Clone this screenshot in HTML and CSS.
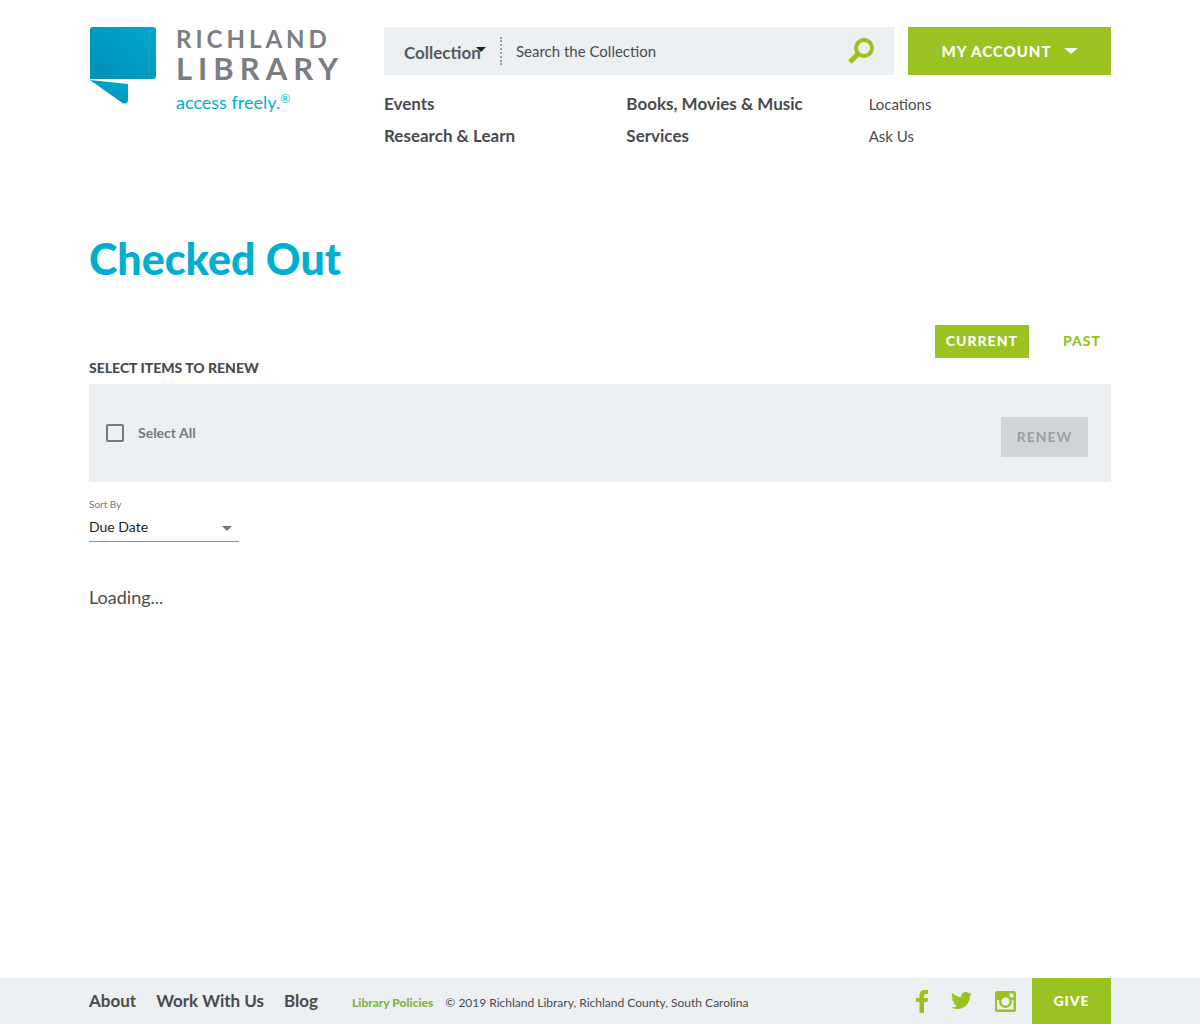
FILE: index.html
```html
<!DOCTYPE html>
<html lang="en">
<head>
<meta charset="utf-8">
<meta name="viewport" content="width=device-width, initial-scale=1">
<title>Checked Out | Richland Library</title>
<link rel="stylesheet" href="styles.css">
</head>
<body>
<header class="wrap header">
  <a class="logo" href="#" aria-label="Richland Library home">
    <svg class="logo-mark" width="68" height="78" viewBox="0 0 68 78" aria-hidden="true">
      <defs>
        <linearGradient id="fill" x1="0" y1="1" x2="1" y2="0">
          <stop offset="0" stop-color="#008fb5"/>
          <stop offset="1" stop-color="#00a9ce"/>
        </linearGradient>
      </defs>
      <path fill="url(#fill)" d="M4 0H64Q67 0 67 3V49Q67 52 64 52H1V3Q1 0 4 0Z"/>
      <path fill="url(#fill)" d="M1 53L39 57V73Q39 77 35 76.500Q34 76.500 32 75Z"/>
    </svg>
    <span class="logo-text">
      <span class="logo-top">RICHLAND</span>
      <span class="logo-main">LIBRARY</span>
      <span class="logo-tag">access freely.<span class="logo-reg">®</span></span>
    </span>
  </a>
  <div class="header-main">
    <div class="tools">
      <form class="search">
        <span class="scope">
          <select class="scope-select" aria-label="Search in"><option>Collection</option><option>Website</option></select>
          <svg class="scope-caret" width="10" height="5" viewBox="0 0 10 5" aria-hidden="true"><path fill="#222" d="M0 0H10L5 5Z"/></svg>
        </span>
        <input class="search-input" type="text" placeholder="Search the Collection" aria-label="Search the Collection">
        <button class="search-button" type="submit" aria-label="Search">
          <svg width="28" height="28" viewBox="0 0 28 28" aria-hidden="true" fill="none" stroke="#9ac221"><circle cx="17" cy="11" r="8" stroke-width="4"/><path stroke-width="5" d="M11 17L3 25"/></svg>
        </button>
      </form>
      <button class="account" type="button">MY ACCOUNT
        <svg width="14" height="6" viewBox="0 0 14 6" aria-hidden="true"><path fill="#fff" d="M0 0H14L7 6Z"/></svg>
      </button>
    </div>
    <nav class="nav" aria-label="Main">
      <a href="#">Events</a>
      <a href="#">Books, Movies &amp; Music</a>
      <a class="minor" href="#">Locations</a>
      <a href="#">Research &amp; Learn</a>
      <a href="#">Services</a>
      <a class="minor" href="#">Ask Us</a>
    </nav>
  </div>
</header>

<main class="wrap main">
  <h1 class="title">Checked Out</h1>
  <nav class="tabs" aria-label="Checkouts">
    <a class="tab tab-active" href="#" aria-current="page">CURRENT</a>
    <a class="tab" href="#">PAST</a>
  </nav>
  <h2 class="subtitle">SELECT ITEMS TO RENEW</h2>
  <div class="panel">
    <label class="select-all"><input class="checkbox" type="checkbox">Select All</label>
    <button class="renew" type="button" disabled>RENEW</button>
  </div>
  <div class="sort">
    <label class="sort-label" for="sort">Sort By</label>
    <select class="sort-select" id="sort"><option>Due Date</option><option>Title</option><option>Author</option></select>
    <svg class="sort-caret" width="10" height="5" viewBox="0 0 10 5" aria-hidden="true"><path fill="#757575" d="M0 0H10L5 5Z"/></svg>
  </div>
  <p class="loading">Loading...</p>
</main>

<footer class="footer">
  <div class="wrap footer-row">
    <nav class="footer-nav" aria-label="Footer">
      <a href="#">About</a>
      <a href="#">Work With Us</a>
      <a href="#">Blog</a>
    </nav>
    <p class="legal"><a href="#">Library Policies</a><span>© 2019 Richland Library, Richland County, South Carolina</span></p>
    <div class="social">
      <a href="#" aria-label="Facebook"><svg width="12" height="23" viewBox="0 0 12 23" aria-hidden="true"><path fill="#9ac221" d="M12 0V4H10Q8 4 8 6V8H12L11.600 12H8V23H3.500V12H0V8H3.500V5.500Q3.500 0 9 0Z"/></svg></a>
      <a href="#" aria-label="Twitter"><svg width="21" height="20" viewBox="0 2 24 21" aria-hidden="true"><path fill="#9ac221" d="M23.950 4.570a10 10 0 0 1-2.820.770 4.960 4.960 0 0 0 2.160-2.720c-.950.550-2 .960-3.130 1.180a4.920 4.920 0 0 0-8.380 4.480C7.690 8.090 4.070 6.130 1.640 3.160a4.920 4.920 0 0 0 1.520 6.570 4.900 4.900 0 0 1-2.230-.610v.060a4.920 4.920 0 0 0 3.950 4.830 5 5 0 0 1-2.210.080 4.940 4.940 0 0 0 4.600 3.420A9.870 9.870 0 0 1 0 19.540a14 14 0 0 0 7.550 2.210c9.050 0 14-7.500 14-13.980 0-.210 0-.420-.020-.630a9.940 9.940 0 0 0 2.420-2.570Z"/></svg></a>
      <a href="#" aria-label="Instagram"><svg width="21" height="21" viewBox="0 0 21 21" aria-hidden="true"><rect width="21" height="21" rx="2.500" fill="#9ac221"/><path fill="#ecf0f3" d="M2 9H18.500V18.500H2ZM14.500 2.500H18.500V6.500H14.500Z"/><circle cx="10.500" cy="10.500" r="6.500" fill="#9ac221"/><circle cx="10.500" cy="10.500" r="4" fill="#ecf0f3"/></svg></a>
    </div>
    <a class="give" href="#">GIVE</a>
  </div>
</footer>
</body>
</html>
```

FILE: styles.css
```css
* { box-sizing: border-box; }

body {
  margin: 0;
  min-height: 100vh;
  display: flex;
  flex-direction: column;
  background: #fff;
  color: #4a4b4d;
  font-family: Lato, "Open Sans", sans-serif;
  font-size: 16px;
  line-height: 24px;
}

a { color: inherit; text-decoration: none; }
h1, h2, p { margin: 0; }
svg { display: block; }
button, select, input { margin: 0; font: inherit; color: inherit; border: 0; border-radius: 0; }

.wrap { width: 100%; max-width: 1022px; margin: 0 auto; }

/* Header */
.header { display: flex; padding-top: 27px; }
.logo { flex: 0 0 295px; display: flex; gap: 19px; }
.logo-text { display: flex; flex-direction: column; color: #7b7d82; font-weight: 700; white-space: nowrap; }
.logo-top { font-size: 24px; line-height: 24px; letter-spacing: 4px; }
.logo-main { font-size: 31px; line-height: 34px; letter-spacing: 6px; }
.logo-tag { display: flex; color: #00aed0; font-size: 18px; font-weight: 400; line-height: 34px; }
.logo-reg { font-size: 12px; line-height: 28px; }

.header-main { flex: 1; }
.tools { display: flex; gap: 14px; }
.search { flex: 1; display: flex; align-items: center; height: 48px; padding-left: 20px; background: #ecf0f3; }
.scope { position: relative; width: 98px; border-right: 2px dotted #999b9e; }
.scope-select { display: block; width: 100%; height: 28px; padding: 4px 0 0; appearance: none; background: none; color: #58595b; font-size: 17px; font-weight: 700; }
.scope-caret { position: absolute; top: 10px; right: 14px; }
.search-input { flex: 1; min-width: 0; padding: 0 14px; background: none; font-size: 15px; }
.search-input::placeholder { color: #4a4b4d; opacity: 1; }
.search-button { padding: 0 19px 0 0; background: none; }
.account { width: 203px; display: flex; justify-content: center; align-items: center; gap: 12px; background: #9ac221; color: #fff; font-weight: 900; font-size: 15px; letter-spacing: 1px; }

.nav { display: grid; grid-template-columns: repeat(3, 1fr); row-gap: 8px; padding-top: 17px; font-size: 17px; font-weight: 700; }
.nav .minor { font-size: 15px; font-weight: 400; }

/* Checkouts */
.main { flex: 1; padding-top: 86px; }
.title { color: #00aed0; font-family: "Lato Black", Lato, sans-serif; font-size: 43px; font-weight: 900; line-height: 50px; }
.tabs { display: flex; justify-content: flex-end; gap: 24px; padding-top: 41px; }
.tab { padding: 4px 10px 5px; color: #9ac221; font-size: 14px; font-weight: 900; letter-spacing: 1px; }
.tab-active { padding: 4px 11px 5px; background: #9ac221; color: #fff; }
.subtitle { font-size: 14px; font-weight: 900; line-height: 20px; }
.panel { display: flex; align-items: center; justify-content: space-between; margin-top: 6px; padding: 33px 23px 25px 17px; background: #ecf0f3; }
.select-all { display: flex; align-items: center; gap: 14px; margin-bottom: 8px; color: #77787b; font-size: 14px; font-weight: 700; }
.checkbox { width: 18px; height: 18px; appearance: none; border: 2px solid #77787b; border-radius: 2px; }
.checkbox:checked { background: #77787b; }
.renew { width: 87px; height: 40px; background: #d0d4d7; color: #9c9ea0; font-size: 14px; font-weight: 700; letter-spacing: 1px; }

.sort { position: relative; width: 150px; padding-top: 14px; }
.sort-label { display: block; color: #77787b; font-size: 10px; line-height: 16px; }
.sort-select { display: block; width: 100%; height: 30px; padding: 0; appearance: none; background: none; border-bottom: 1px solid #949494; color: #222; font-size: 14px; }
.sort-caret { position: absolute; right: 7px; bottom: 11px; }
.loading { padding-top: 43px; font-size: 18px; }

/* Footer */
.footer { background: #ecf0f3; }
.footer-row { display: flex; align-items: center; min-height: 46px; }
.footer-nav { display: flex; gap: 20px; font-size: 17px; font-weight: 700; }
.legal { display: flex; gap: 12px; padding: 4px 0 0 34px; font-size: 12px; }
.legal a { color: #7fb539; font-weight: 900; }
.social { display: flex; align-items: center; gap: 23px; margin-left: auto; padding-right: 16px; }
.give { align-self: stretch; display: flex; align-items: center; justify-content: center; width: 79px; background: #9ac221; color: #fff; font-size: 14px; font-weight: 900; letter-spacing: 1px; }
```
